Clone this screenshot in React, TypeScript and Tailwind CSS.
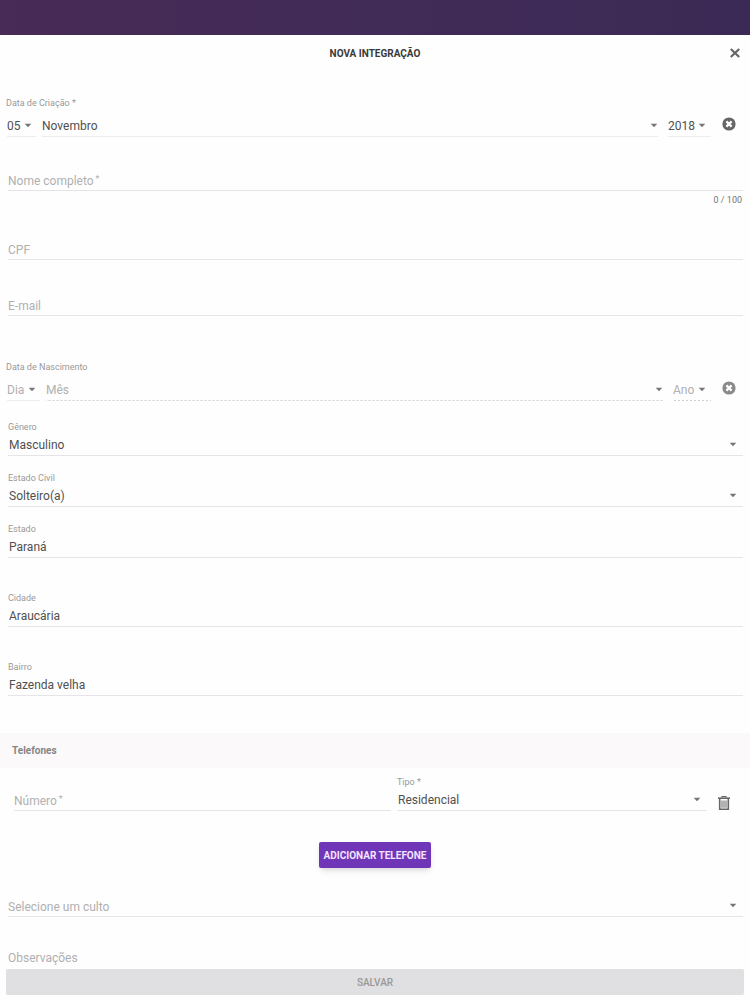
import React, { useState } from 'react';
import clsx from 'clsx';

const Caret = ({ className }: { className?: string }) => (
  <svg
    viewBox="0 0 8 5"
    aria-hidden="true"
    className={clsx('pointer-events-none absolute top-[9px] h-[5px] w-2 fill-[#757575]', className)}
  >
    <path d="M.7.7h6.6L4 4.3z" />
  </svg>
);

const CloseIcon = () => (
  <svg viewBox="0 0 14 14" fill="none" stroke="currentColor" strokeWidth="2.2" className="size-[14px]">
    <path d="M2.8 3l8.4 8M11.2 3l-8.4 8" />
  </svg>
);

const ClearIcon = () => (
  <svg viewBox="0 0 14 14" fill="none" className="size-[14px]">
    <circle cx="7" cy="7" r="6.6" fill="currentColor" />
    <path d="M4.4 4.4l5.2 5.2M9.6 4.4L4.4 9.6" stroke="#fefefe" strokeWidth="2.2" />
  </svg>
);

const TrashIcon = () => (
  <svg viewBox="0 0 14 16" fill="none" stroke="currentColor" className="h-4 w-3.5">
    <path d="M1 3.2h12" strokeWidth="1.6" />
    <path d="M5 2.4V1.5h4v.9" strokeWidth="1.2" />
    <path d="M2.7 4v10.3h8.6V4" strokeWidth="1.6" />
    <path d="M5 5.5v7.3M7 5.5v7.3M9 5.5v7.3" strokeWidth="1" />
  </svg>
);

interface FieldProps {
  id: string;
  label: string;
  required?: boolean;
  defaultValue?: string;
  className?: string;
}

const labelStyle = 'block h-3 text-[9px] leading-3 text-[#999]';
const controlStyle =
  'block h-[23px] w-full appearance-none rounded-none border-b border-[#e6e4e6] bg-transparent pt-0.5 pl-px text-xs text-[#505050] outline-none focus:border-[#673ab7]';
// Label resting on top of an empty control
const restingLabelStyle =
  'pointer-events-none absolute top-[3px] left-0 text-xs leading-5 text-[#b0b0b0]';

const RequiredMark = () => <span className="ml-0.5 align-top text-[9px] leading-4">*</span>;

const TextField: React.FC<FieldProps> = ({ id, label, required, defaultValue = '', className }) => {
  const [value, setValue] = useState(defaultValue);

  return (
    <div className={clsx('relative', className)}>
      <label htmlFor={id} className={defaultValue ? labelStyle : clsx(restingLabelStyle, value && 'hidden')}>
        {label}
        {required && <RequiredMark />}
      </label>
      <input
        id={id}
        type="text"
        value={value}
        onChange={(e) => setValue(e.target.value)}
        className={controlStyle}
      />
    </div>
  );
};

interface SelectFieldProps extends FieldProps {
  options: string[];
}

const SelectField: React.FC<SelectFieldProps> = ({ id, label, options, defaultValue = '', className }) => {
  const [value, setValue] = useState(defaultValue);

  return (
    <div className={clsx('relative', className)}>
      <label htmlFor={id} className={defaultValue ? labelStyle : clsx(restingLabelStyle, value && 'hidden')}>
        {label}
      </label>
      <div className="relative">
        <select id={id} value={value} onChange={(e) => setValue(e.target.value)} className={controlStyle}>
          {!defaultValue && <option value="" />}
          {options.map((option) => (
            <option key={option}>{option}</option>
          ))}
        </select>
        <Caret className="right-1.5" />
      </div>
    </div>
  );
};

interface DatePartProps {
  label: string;
  options: string[];
  empty?: boolean;
  dotted?: boolean;
  caret?: string;
  className?: string;
}

const DatePart: React.FC<DatePartProps> = ({ label, options, empty, dotted, caret = 'right-1', className }) => (
  <div className={clsx('relative', className)}>
    <select
      aria-label={label}
      className={clsx(
        'block h-[23px] w-full appearance-none rounded-none pt-0.5 text-xs outline-none',
        empty ? 'text-[#b0b0b0]' : 'text-[#505050]',
        dotted
          ? 'border-b border-transparent bg-[linear-gradient(to_right,#cfcfcf_50%,transparent_0)] bg-[length:4px_1px] bg-bottom bg-repeat-x bg-origin-border'
          : 'border-b border-[#eeecee]'
      )}
    >
      {options.map((option) => (
        <option key={option}>{option}</option>
      ))}
    </select>
    <Caret className={caret} />
  </div>
);

const ClearButton = ({ label, className }: { label: string; className?: string }) => (
  <button type="button" aria-label={label} className={clsx('ml-[11px] h-[19px] self-start', className)}>
    <ClearIcon />
  </button>
);

export default function App() {
  const [name, setName] = useState('');
  const [notes, setNotes] = useState('');

  return (
    <div className="min-h-screen bg-[#fefefe] font-['Roboto',sans-serif]">
      <header className="h-[35px] bg-linear-to-r from-[#482b56] via-[#412b57] to-[#3b2a55]" />

      <div className="grid h-9 grid-cols-[1fr_auto_1fr] items-center px-2">
        <h1 className="col-start-2 text-[10px] font-bold text-[#3a3a3a]">NOVA INTEGRAÇÃO</h1>
        <button type="button" aria-label="Fechar" className="justify-self-end text-[#666]">
          <CloseIcon />
        </button>
      </div>

      <form onSubmit={(e) => e.preventDefault()}>
        {/* Creation date */}
        <fieldset className="mt-[26px] px-[7px]">
          <legend className={clsx(labelStyle, '-ml-px')}>Data de Criação *</legend>
          <div className="mt-[5px] flex items-center">
            <DatePart label="Dia de criação" options={['05', '06', '07']} className="w-[29px]" />
            <DatePart
              label="Mês de criação"
              options={['Novembro', 'Dezembro']}
              caret="right-0"
              className="ml-1.5 flex-1"
            />
            <DatePart label="Ano de criação" options={['2018', '2019']} caret="right-[5px]" className="ml-2.5 w-[43px]" />
            <ClearButton label="Limpar data de criação" className="mr-[7px] text-[#666]" />
          </div>
        </fieldset>

        {/* Personal data */}
        <div className="pr-[7px] pl-2">
          <div className="relative mt-[31px]">
            <label htmlFor="nome" className={clsx(restingLabelStyle, name && 'hidden')}>
              Nome completo
              <RequiredMark />
            </label>
            <input
              id="nome"
              type="text"
              maxLength={100}
              value={name}
              onChange={(e) => setName(e.target.value)}
              className={controlStyle}
            />
            <p className="mt-[3px] h-3 pr-px text-right text-[9px] leading-3 text-[#757575]">{name.length} / 100</p>
          </div>
          <TextField id="cpf" label="CPF" className="mt-[31px]" />
          <TextField id="email" label="E-mail" className="mt-[33px]" />
        </div>

        {/* Birth date */}
        <fieldset className="mt-[45px] px-[7px]">
          <legend className={clsx(labelStyle, '-ml-px')}>Data de Nascimento</legend>
          <div className="mt-[5px] flex items-center">
            <DatePart label="Dia de nascimento" options={['Dia']} empty className="w-[33px]" />
            <DatePart label="Mês de nascimento" options={['Mês']} empty dotted caret="right-0" className="ml-1.5 flex-1" />
            <DatePart
              label="Ano de nascimento"
              options={['Ano']}
              empty
              dotted
              caret="right-[5px]"
              className="ml-2.5 w-[38px]"
            />
            <ClearButton label="Limpar data de nascimento" className="mr-[7px] text-[#8a8a8a]" />
          </div>
        </fieldset>

        <div className="mt-5 flex flex-col gap-4 pr-[7px] pl-2">
          <SelectField id="genero" label="Gênero" defaultValue="Masculino" options={['Masculino', 'Feminino']} />
          <SelectField
            id="estado-civil"
            label="Estado Civil"
            defaultValue="Solteiro(a)"
            options={['Solteiro(a)', 'Casado(a)', 'Viúvo(a)']}
          />
          <TextField id="estado" label="Estado" defaultValue="Paraná" />
        </div>
        <div className="mt-[34px] flex flex-col gap-[34px] pr-[7px] pl-2">
          <TextField id="cidade" label="Cidade" defaultValue="Araucária" />
          <TextField id="bairro" label="Bairro" defaultValue="Fazenda velha" />
        </div>

        {/* Phones */}
        <section>
          <h2 className="mt-[37px] flex h-[35px] items-center bg-[#fbf9fa] px-3 text-[10px] font-bold text-[#858585]">
            Telefones
          </h2>
          <div className="mt-2 flex items-end pr-[19px] pl-3.5">
            <TextField id="numero" label="Número" required className="flex-[377]" />
            <SelectField
              id="tipo"
              label="Tipo *"
              defaultValue="Residencial"
              options={['Residencial', 'Celular', 'Comercial']}
              className="ml-1.5 flex-[310]"
            />
            <button type="button" aria-label="Remover telefone" className="ml-2.5 text-[#666]">
              <TrashIcon />
            </button>
          </div>
          <button
            type="button"
            className="mx-auto mt-[31px] block h-[26px] rounded-xs bg-[#7036b8] px-[5px] text-[10px] font-bold text-[#f3e4ff] shadow-md"
          >
            ADICIONAR TELEFONE
          </button>
        </section>

        <SelectField
          id="culto"
          label="Selecione um culto"
          options={['Culto de domingo', 'Culto de quarta']}
          className="mt-[26px] mr-[7px] ml-2"
        />

        <div className="relative mx-2 mt-[30px]">
          <label htmlFor="observacoes" className={clsx(restingLabelStyle, '-mt-0.5', notes && 'hidden')}>
            Observações
          </label>
          <textarea
            id="observacoes"
            rows={1}
            value={notes}
            onChange={(e) => setNotes(e.target.value)}
            className="block h-[22px] w-full resize-none text-xs leading-5 text-[#505050] outline-none"
          />
        </div>
        <div className="px-1.5 pb-[5px]">
          <button
            type="submit"
            disabled
            className="block h-[26px] w-full rounded-xs bg-[#e0dfe1] text-[10px] font-medium text-[#999]"
          >
            SALVAR
          </button>
        </div>
      </form>
    </div>
  );
}
